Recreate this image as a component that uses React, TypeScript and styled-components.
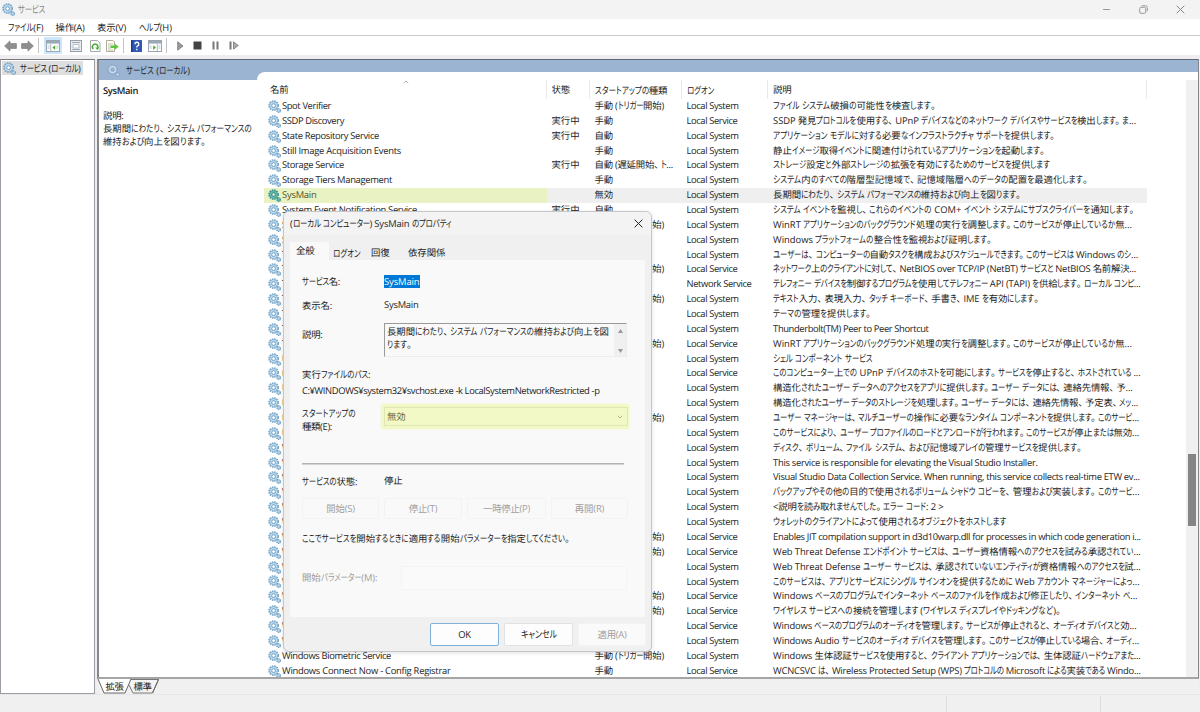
import React, { useLayoutEffect, useRef } from "react";
import styled, { createGlobalStyle, css } from "styled-components";

const Global = createGlobalStyle`
  * { box-sizing: border-box; }
  html, body { margin: 0; padding: 0; }
  body {
    width: 1200px; height: 712px; overflow: hidden; background: #f0f0f0; color: #222;
    font-family: "Open Sans", "Noto Sans CJK JP", sans-serif;
    font-size: 9.4px; line-height: 12px;
    text-rendering: geometricPrecision;
  }
`;

const Run = styled.span`
  display: inline-block;
  white-space: pre;
`;
const Kana = styled.span`
  display: inline-block;
  font-size: 10px;
  line-height: 12px;
  transform-origin: 0 50%;
  font-feature-settings: "palt" 1;
`;
const Stop = styled.span`
  font-feature-settings: "palt" 1;
  margin-right: 2.4px;
`;

/* Sets one line of text to the given width: kana are condensed, other scripts are tracked. */
function Fit({ w, children }: { w?: number; children: string }) {
  const ref = useRef<HTMLSpanElement>(null);
  useLayoutEffect(() => {
    const el = ref.current;
    if (!el || !w) return;
    const runs = Array.from(el.querySelectorAll<HTMLElement>("[data-kana]"));
    el.style.letterSpacing = "0px";
    runs.forEach(r => { r.style.transform = ""; r.style.marginRight = "0px"; });
    const widths = runs.map(r => r.getBoundingClientRect().width);
    const kana = widths.reduce((a, b) => a + b, 0);
    const rest = el.getBoundingClientRect().width - kana;
    if (kana > 0) {
      const f = Math.max(0.74, Math.min(1.02, (w - rest) / kana));
      runs.forEach((r, i) => {
        r.style.transform = `scaleX(${f})`;
        r.style.marginRight = `${(f - 1) * widths[i]}px`;
      });
    }
    const now = el.getBoundingClientRect().width;
    el.style.letterSpacing = `${(w - now) / children.length}px`;
  }, [w, children]);
  const parts = children.split(/([\u3041-\u30ff]+|[、。])/);
  return (
    <Run ref={ref}>
      {parts.map((p, i) => {
        if (i % 2 === 0) return p;
        return p === "、" || p === "。" ? <Stop key={i}>{p}</Stop> : <Kana key={i} data-kana="">{p}</Kana>;
      })}
    </Run>
  );
}

const Window = styled.div`
  position: relative;
  width: 1200px; height: 712px;
  display: flex; flex-direction: column;
`;
const TitleBar = styled.header`
  height: 19px; flex: none; background: #f3f3f3; color: #858585;
  display: flex; align-items: center; padding: 0 15.5px 0 2px; gap: 3px;
`;
const Caption = styled.div`
  margin-left: auto; display: flex; gap: 28px; align-items: center;
`;
const MenuBar = styled.nav`
  height: 17px; flex: none; background: #fff; border-bottom: 1px solid #c9c9c9;
  display: flex; align-items: center; padding: 1px 0 0 8px;
`;
const MenuItem = styled.div<{ $w: number }>`
  width: ${p => p.$w}px; flex: none;
`;
const ToolBar = styled.div`
  height: 19px; flex: none; background: #fff; display: flex; align-items: center;
`;
const Tool = styled.div<{ $w: number; $on?: boolean }>`
  width: ${p => p.$w}px; height: 17px; flex: none; display: flex; align-items: center; justify-content: center;
  ${p => p.$on && css`background: #cce6fb;`}
`;
const Sep = styled.i<{ $m: string }>`
  width: 1px; height: 15px; background: #c4c4c4; margin: ${p => p.$m}; flex: none;
`;
const Body = styled.div`
  flex: none; height: 639px; display: flex; padding-top: 4px; background: #f0edf0; gap: 2px;
`;
const Tree = styled.aside`
  width: 95px; height: 635px; background: #fff; border: 1px solid #9a9da3; border-top: 1px solid #777b80; flex: none;
`;
const TreeItem = styled.div`
  margin: 1px 0 0 1px; width: 81px; height: 14px; background: #dedede;
  display: flex; align-items: center; gap: 4px; padding-left: 1px;
`;
const Right = styled.section`
  width: 1102px; display: flex; flex-direction: column; background: #f0f0f0;
`;
const Pane = styled.div`
  height: 620px; flex: none; background: #9ab4d1; border: 1px solid #85898d; border-left-width: 2px; border-top-color: #5f6a76;
  border-bottom: 2px solid #a5a5a5; display: flex; flex-direction: column;
`;
const PaneTitle = styled.div`
  height: 12px; flex: none; display: flex; align-items: flex-start; gap: 6px; padding: 4px 0 0 8px; overflow: visible;
`;
const PaneBody = styled.div`
  flex: 1; display: flex; min-height: 0;
`;
const Detail = styled.div`
  width: 158px; margin-top: 8px; background: #fff; padding: 4px 0 0 4px; flex: none;
  display: flex; flex-direction: column;
`;
const DetailName = styled.b`
  font-weight: 600; margin-bottom: 13px; line-height: 13px;
`;
const List = styled.div`
  flex: 1; background: #fff; border-top-left-radius: 8px; display: flex; padding-top: 8px; min-width: 0;
`;
const Table = styled.div`
  width: 929px; flex: none; padding-left: 7px; overflow: hidden;
`;
const columns = "282.5px 43px 92px 86.6px 378.9px";
const Head = styled.div`
  display: grid; grid-template-columns: ${columns}; height: 19px;
`;
const HeadCell = styled.div`
  border-right: 1px solid #e9e9e9; padding: 4px 0 0 5px; position: relative; white-space: nowrap;
  &:first-child { padding-left: 6px; }
`;
const SortMark = styled.svg`
  position: absolute; left: 139px; top: 0;
`;
const Row = styled.div<{ $sel?: boolean }>`
  display: grid; grid-template-columns: ${columns}; height: 14.865px; width: 883px; white-space: nowrap;
  background: ${p => (p.$sel ? "#efefef" : "transparent")};
`;
const Cell = styled.div<{ $hl?: boolean }>`
  padding-left: 5px; line-height: 14.8px; overflow: hidden;
  &:first-child { padding-left: 4px; display: flex; align-items: center; gap: 1px; }
  ${p => p.$hl && css`background: #e9f2c3; color: #4c5426;`}
`;
const Scroll = styled.div`
  margin-left: auto; width: 12px; background: #f0f0f0; padding: 374px 2px 0;
`;
const Thumb = styled.div`
  height: 72px; background: #858585;
`;
const Tabs = styled.svg`
  display: block;
`;
const StatusBar = styled.footer`
  flex: 1; background: #f0f0f0; border-top: 1px solid #e6e6e6; display: flex; justify-content: flex-end; padding-top: 1px;
`;
const StatusCell = styled.div<{ $w: number }>`
  width: ${p => p.$w}px; border-left: 1px solid #dedede;
`;

const Dialog = styled.div`
  position: absolute; left: 283px; top: 211px; width: 369px; height: 441px;
  background: #f0f0f0; border: 1px solid #c6c6c6; border-radius: 6px; box-shadow: 0 1px 4px rgba(0,0,0,.12);
  display: flex; flex-direction: column; overflow: hidden;
`;
const DialogTitle = styled.div`
  height: 23px; flex: none; background: #f3f3f3; padding: 0 8.5px 0 6px;
  display: flex; align-items: center; justify-content: space-between;
`;
const TabStrip = styled.div`
  display: flex; height: 25px; flex: none; padding: 7px 0 0 6px;
`;
const Tab = styled.div<{ $w: number; $on?: boolean }>`
  width: ${p => p.$w}px; padding: ${p => (p.$on ? "3px 0 0 6px" : "5px 0 0 4px")};
  ${p => p.$on && css`background: #f9f9f9;`}
`;
const Page = styled.div`
  margin-left: 6px; width: 355px; height: 357px; flex: none; background: #f9f9f9; padding: 9px 0 0 12px;
  display: flex; flex-direction: column;
`;
const Field = styled.div<{ $h: number; $muted?: boolean }>`
  height: ${p => p.$h}px; flex: none; display: flex; align-items: center;
  ${p => p.$muted && css`color: #9a9a9a;`}
`;
const Label = styled.div<{ $w?: number; $shift?: number }>`
  width: ${p => p.$w ?? 82}px; flex: none; margin-top: ${p => p.$shift ?? 0}px; line-height: 13px;
`;
const Selected = styled.span`
  background: #0078d7; color: #fff; height: 13px; line-height: 13px; width: 36px;
`;
const Memo = styled.div`
  width: 243px; height: 34px; border: 1px solid #ececec; border-top-color: #9a9a9a; border-left-color: #9a9a9a;
  display: flex; justify-content: space-between; padding-left: 2px;
`;
const MemoText = styled.div`
  padding-top: 1px; line-height: 12.5px;
`;
const MemoScroll = styled.div`
  width: 12px; background: #f0f0f0; color: #999; display: flex; flex-direction: column; justify-content: space-between;
  align-items: center; padding: 5px 0 3px;
`;
const Combo = styled.div`
  width: 248px; height: 25px; margin-left: -3px; background: #f2f9c6; padding: 3px 1px 3px 3px; border-radius: 2px; box-shadow: 0 0 2px #f1f8c4;
`;
const ComboBox = styled.div`
  height: 19px; border: 1px solid #dfe8b0; display: flex; align-items: center; justify-content: space-between;
  padding: 1px 4px 0 2px; color: #626845;
`;
const Rule = styled.div`
  width: 322px; height: 2px; background: #b4b4b4; border-bottom: 1px solid #d4d4d4; margin: 26px 0 7px; flex: none;
`;
const PushRow = styled.div`
  display: flex; justify-content: space-between; width: 326px; height: 21px; margin: 8px 0 8px; flex: none;
`;
const Push = styled.button<{ $w: number; $kind?: "default" | "off" | "ghost" }>`
  width: ${p => p.$w}px; height: 100%; padding: 1px 0 0; font: inherit; color: #222; background: #fdfdfd; border: 1px solid #e2e2e2; border-radius: 2px;
  ${p => p.$kind === "default" && css`border-color: #7fb0d8;`}
  ${p => p.$kind === "off" && css`color: #a0a0a0; border-color: #f3f3f3; background: #f9f9f9;`}
  ${p => p.$kind === "ghost" && css`color: #a0a0a0; border-color: #f3f3f3; background: #fafafa;`}
`;
const Param = styled.div`
  width: 226px; height: 24px; border: 1px solid #f4f4f4; background: #fafafa;
`;
const DialogFoot = styled.div`
  display: flex; gap: 5px; padding: 6px 5px 0 0; justify-content: flex-end; height: 28.5px;
`;
const Icon = styled.svg`
  flex: none; display: block;
`;

const tones = {
  blue: ["#6a9cc2", "#c6e0f1", "#ffffff", "#7ba8ca"],
  teal: ["#2f8a8c", "#6fbdb0", "#cfe9bd", "#3f9a96"],
  pale: ["#8aa8c8", "#d3e3f1", "#9ab4d1", "#8aa8c8"],
};
function Gear({ tone = "blue" }: { tone?: keyof typeof tones }) {
  const [edge, body, hole, small] = tones[tone];
  return (
    <Icon width="13" height="13" viewBox="0 0 13 13">
      <circle cx="5.6" cy="5.6" r="4.6" fill="none" stroke={edge} strokeWidth="1.5" strokeDasharray="1.5 .91" />
      <circle cx="5.6" cy="5.6" r="4" fill={body} stroke={edge} strokeWidth=".6" />
      <circle cx="5.6" cy="5.6" r="1.9" fill={hole} stroke={edge} strokeWidth="1" />
      <circle cx="10.6" cy="10.6" r="1.7" fill={body} stroke={small} strokeWidth="1.5" strokeDasharray="1.3 .4" />
    </Icon>
  );
}

type Svc = [string, number, string, string, number];
const T = "手動 (トリガー開始)";
const services: Svc[] = [
  ["Spot Verifier", 49, "", T, 0], ["SSDP Discovery", 62, "実行中", "手動", 1],
  ["State Repository Service", 97, "実行中", "自動", 0], ["Still Image Acquisition Events", 119, "", "手動", 0],
  ["Storage Service", 62, "実行中", "自動 (遅延開始、ト...", 0], ["Storage Tiers Management", 110, "", "手動", 0],
  ["SysMain", 34.5, "", "無効", 0], ["System Event Notification Service", 135, "実行中", "自動", 0],
  ["System Events Broker", 0, "実行中", T, 0], ["System Guard Runtime Monitor Broker", 0, "実行中", "自動", 0],
  ["Task Scheduler", 0, "実行中", "自動", 0], ["TCP/IP NetBIOS Helper", 0, "実行中", T, 1],
  ["Telephony", 0, "", "手動", 2], ["Text Input Management Service", 0, "実行中", T, 0],
  ["Themes", 0, "実行中", "自動", 0], ["Thunderbolt(TM) Peer to Peer Shortcut", 0, "実行中", "自動", 0],
  ["Time Broker", 0, "実行中", T, 1], ["Udk User Service", 0, "実行中", "手動", 0],
  ["UPnP Device Host", 0, "", "手動", 1], ["User Data Access", 0, "実行中", "手動", 0],
  ["User Data Storage", 0, "実行中", "手動", 0], ["User Manager", 0, "実行中", T, 0],
  ["User Profile Service", 0, "実行中", "自動", 0], ["Virtual Disk", 0, "", "手動", 0],
  ["Visual Studio Installer Elevation Service", 0, "", "手動", 0], ["Visual Studio Standard Collector Service", 0, "", "手動", 0],
  ["Volume Shadow Copy", 0, "", "手動", 0], ["WaaSMedicSvc", 0, "", "手動", 0],
  ["WalletService", 0, "", "手動", 0], ["WarpJITSvc", 0, "", T, 1],
  ["Web Threat Defense Service", 0, "実行中", T, 1], ["Web Threat Defense User Service", 0, "実行中", "自動", 0],
  ["Web Account Manager", 0, "実行中", "手動", 0], ["WebClient", 0, "", T, 1],
  ["Wi-Fi Direct Service", 0, "", T, 1], ["Windows Audio", 0, "実行中", "自動", 1],
  ["Windows Audio Endpoint Builder", 0, "実行中", "自動", 0], ["Windows Biometric Service", 109, "", T, 0],
  ["Windows Connect Now - Config Registrar", 168.5, "", "手動", 1],
];
const descriptions: [string, number][] = [
  ["ファイル システム破損の可能性を検査します。", 165],
  ["SSDP 発見プロトコルを使用する、UPnP デバイスなどのネットワーク デバイスやサービスを検出します。ま...", 363],
  ["アプリケーション モデルに対する必要なインフラストラクチャ サポートを提供します。", 284],
  ["静止イメージ取得イベントに関連付けられているアプリケーションを起動します。", 274],
  ["ストレージ設定と外部ストレージの拡張を有効にするためのサービスを提供します", 277],
  ["システム内のすべての階層型記憶域で、記憶域階層へのデータの配置を最適化します。", 317],
  ["長期間にわたり、システム パフォーマンスの維持および向上を図ります。", 250],
  ["システム イベントを監視し、これらのイベントの COM+ イベント システムにサブスクライバーを通知します。", 363.5],
  ["WinRT アプリケーションのバックグラウンド処理の実行を調整します。このサービスが停止しているか無...", 359],
  ["Windows プラットフォームの整合性を監視および証明します。", 221],
  ["ユーザーは、コンピューターの自動タスクを構成およびスケジュールできます。このサービスは Windows のシ...", 365],
  ["ネットワーク上のクライアントに対して、NetBIOS over TCP/IP (NetBT) サービスと NetBIOS 名前解決...", 363],
  ["テレフォニー デバイスを制御するプログラムを使用してテレフォニー API (TAPI) を供給します。ローカル コンピ...", 367.6],
  ["テキスト入力、表現入力、タッチ キーボード、手書き、IME を有効にします。", 268],
  ["テーマの管理を提供します。", 100],
  ["Thunderbolt(TM) Peer to Peer Shortcut", 155.5],
  ["WinRT アプリケーションのバックグラウンド処理の実行を調整します。このサービスが停止しているか無...", 359],
  ["シェル コンポーネント サービス", 99],
  ["このコンピューター上での UPnP デバイスのホストを可能にします。サービスを停止すると、ホストされている ...", 367.6],
  ["構造化されたユーザー データへのアクセスをアプリに提供します。ユーザー データには、連絡先情報、予...", 359.5],
  ["構造化されたユーザー データのストレージを処理します。ユーザー データには、連絡先情報、予定表、メッ...", 365],
  ["ユーザー マネージャーは、マルチユーザーの操作に必要なランタイム コンポーネントを提供します。このサービ...", 366],
  ["このサービスにより、ユーザー プロファイルのロードとアンロードが行われます。このサービスが停止または無効...", 366],
  ["ディスク、ボリューム、ファイル システム、および記憶域アレイの管理サービスを提供します。", 311],
  ["This service is responsible for elevating the Visual Studio Installer.", 264.5],
  ["Visual Studio Data Collection Service. When running, this service collects real-time ETW ev...", 366.5],
  ["バックアップやその他の目的で使用されるボリューム シャドウ コピーを、管理および実装します。このサービ...", 366.5],
  ["<説明を読み取れませんでした。エラー コード: 2 >", 170.5],
  ["ウォレットのクライアントによって使用されるオブジェクトをホストします", 233.6],
  ["Enables JIT compilation support in d3d10warp.dll for processes in which code generation i...", 367.6],
  ["Web Threat Defense エンドポイント サービスは、ユーザー資格情報へのアクセスを試みる承認されてい...", 367.6],
  ["Web Threat Defense ユーザー サービスは、承認されていないエンティティが資格情報へのアクセスを試...", 367.6],
  ["このサービスは、アプリとサービスにシングル サインオンを提供するために Web アカウント マネージャーによっ...", 366.5],
  ["Windows ベースのプログラムでインターネット ベースのファイルを作成および修正したり、インターネット ベ...", 364.4],
  ["ワイヤレス サービスへの接続を管理します (ワイヤレス ディスプレイやドッキングなど)。", 290],
  ["Windows ベースのプログラムのオーディオを管理します。サービスが停止されると、オーディオ デバイスと効...", 363.4],
  ["Windows Audio サービスのオーディオ デバイスを管理します。このサービスが停止している場合、オーディ...", 366],
  ["Windows 生体認証サービスを使用すると、クライアント アプリケーションでは、生体認証ハードウェアまた...", 367.6],
  ["WCNCSVC は、Wireless Protected Setup (WPS) プロトコルの Microsoft による実装である Windo...", 367.6],
];
const accounts: [string, number][] = [["Local System", 52], ["Local Service", 51], ["Network Service", 65]];
const startWidth = (s: string) => (s === T ? 69.5 : s.length > 3 ? 78.5 : 18.5);

const Arrow = ({ flip }: { flip?: boolean }) => (
  <Icon width="13" height="12" viewBox="0 0 13 12">
    <path d="M.6 6 6 .9V3.6H12.4V8.4H6V11.1Z" transform={flip ? "matrix(-1 0 0 1 13 0)" : undefined} fill="#8f8f8f" stroke="#7c7c7c" strokeWidth=".7" />
  </Icon>
);
const PanelIcon = ({ right }: { right?: boolean }) => (
  <Icon width="14" height="12" viewBox="0 0 14 12">
    <rect x=".5" y=".5" width="13" height="11" fill="#fff" stroke="#9ba6b0" />
    <path d="M1 1h12v2.6H1z" fill="#9aa9b7" />
    <path d={right ? "M9.3 4v7.5" : "M4.7 4v7.5"} stroke="#9ba6b0" strokeWidth=".8" />
    <path d={right ? "M5.2 5.2 8 7.6 5.2 10Z" : "M9.2 5.2 6.4 7.6 9.2 10Z"} fill="#45b030" />
    <path d={right ? "M10.4 6h2M10.4 8h2M1.6 6h2M1.6 8h2" : "M1.6 6h2M1.6 8h2M10.4 6h2M10.4 8h2"} stroke="#a3b0bc" strokeWidth=".8" />
  </Icon>
);

export default function App() {
  return (
    <Window>
      <Global />
      <TitleBar>
        <Gear />
        <Fit w={27}>サービス</Fit>
        <Caption>
          <svg width="9" height="9"><path d="M1 4.5h7" stroke="#999" /></svg>
          <svg width="9" height="9" fill="none" stroke="#999"><rect x=".7" y="2.3" width="6" height="6" rx="1.2" /><path d="M2.6.8H6.6a1.7 1.7 0 0 1 1.7 1.7V6.2" /></svg>
          <svg width="9" height="9" stroke="#888"><path d="M.7.7l7.6 7.6M8.3.7.7 8.3" /></svg>
        </Caption>
      </TitleBar>
      <MenuBar>
        <MenuItem $w={47.5}><Fit w={35.5}>ファイル(F)</Fit></MenuItem>
        <MenuItem $w={41.5}><Fit w={29}>操作(A)</Fit></MenuItem>
        <MenuItem $w={41.5}><Fit w={29}>表示(V)</Fit></MenuItem>
        <MenuItem $w={40}><Fit w={33.5}>ヘルプ(H)</Fit></MenuItem>
      </MenuBar>
      <ToolBar>
        <Tool $w={20}><Arrow /></Tool>
        <Tool $w={15}><Arrow flip /></Tool>
        <Sep $m="0 5px 0 3px" />
        <Tool $w={18} $on><PanelIcon /></Tool>
        <Tool $w={28}>
          <Icon width="12" height="12"><rect x=".5" y=".5" width="11" height="11" fill="#e9edf1" stroke="#98a0a8" /><path d="M2 2.5h8M2 9.5h8" stroke="#a0aab4" /><path d="M3 4.5h6v3.5H3z" fill="#fff" stroke="#a8b2bc" strokeWidth=".8" /></Icon>
        </Tool>
        <Tool $w={10}>
          <Icon width="11" height="12"><path d="M.5.5H7.5L10 3V11.5H.5Z" fill="#fff" stroke="#a9a9a9" /><path d="M3.4 8.9A2.7 2.7 0 1 1 7.6 7.8" fill="none" stroke="#3fae2c" strokeWidth="1.5" /><path d="M5.4 7.6H9.2L7.4 10.2Z" fill="#3fae2c" /></Icon>
        </Tool>
        <Tool $w={25}>
          <Icon width="13" height="12"><path d="M.5.5H7L8.5 2V11.5H.5Z" fill="#fffdf0" stroke="#b0ab98" /><path d="M2 4h5M2 6h3M2 8h3M2 10h5" stroke="#aaa" strokeWidth=".7" /><path d="M4.6 5.6H8.6V3.6L12.7 6.8 8.6 10V8H4.6Z" fill="#5ec63c" /></Icon>
        </Tool>
        <Sep $m="0 4px 0 -2px" />
        <Tool $w={17}>
          <Icon width="11" height="12" viewBox="0 0 11 12"><rect width="11" height="12" rx=".5" fill="#3358b4" /><rect width="1.5" height="12" fill="#1d3a8a" /><path d="M4 4.3A1.9 1.9 0 1 1 6.3 6Q5.8 6.3 5.8 7.6M5.8 8.8V10.2" stroke="#fff" strokeWidth="1.3" fill="none" /></Icon>
        </Tool>
        <Tool $w={20}><PanelIcon right /></Tool>
        <Sep $m="0 0 0 1px" />
        <Tool $w={26}><Icon width="7" height="10"><path d="M.7.8 6 5 .7 9.2Z" fill="#999" stroke="#777" strokeWidth=".8" /></Icon></Tool>
        <Tool $w={8}><Icon width="9" height="9"><rect x=".5" y=".5" width="8" height="8" fill="#444" /></Icon></Tool>
        <Tool $w={28}><Icon width="7" height="9"><path d="M.5.5h2v8h-2zM4.5.5h2v8h-2z" fill="#777" /></Icon></Tool>
        <Tool $w={9}><Icon width="10" height="9"><path d="M.5.5h2v8h-2z" fill="#777" /><path d="M4.5 .8 9.3 4.5 4.5 8.2Z" fill="#aaa" stroke="#777" strokeWidth=".8" /></Icon></Tool>
      </ToolBar>
      <Body>
        <Tree>
          <TreeItem><Gear /><Fit w={60.5}>サービス (ローカル)</Fit></TreeItem>
        </Tree>
        <Right>
          <Pane>
            <PaneTitle><Gear tone="pale" /><Fit w={64}>サービス (ローカル)</Fit></PaneTitle>
            <PaneBody>
              <Detail>
                <DetailName><Fit w={35}>SysMain</Fit></DetailName>
                <span><Fit w={20.5}>説明:</Fit></span>
                <span><Fit w={149}>長期間にわたり、システム パフォーマンスの</Fit></span>
                <span><Fit w={105}>維持および向上を図ります。</Fit></span>
              </Detail>
              <List>
                <Table>
                  <Head>
                    <HeadCell><Fit w={18.5}>名前</Fit><SortMark width="6" height="4"><path d="M.8 3 3 1 5.2 3" fill="none" stroke="#999" strokeWidth=".8" /></SortMark></HeadCell>
                    <HeadCell><Fit w={18.5}>状態</Fit></HeadCell>
                    <HeadCell><Fit w={73}>スタートアップの種類</Fit></HeadCell>
                    <HeadCell><Fit w={27}>ログオン</Fit></HeadCell>
                    <HeadCell><Fit w={18.5}>説明</Fit></HeadCell>
                  </Head>
                  {services.map(([name, w, state, start, acc], i) => (
                    <Row key={i} $sel={i === 6}>
                      <Cell $hl={i === 6}><Gear tone={i === 6 ? "teal" : "blue"} /><Fit w={w}>{name}</Fit></Cell>
                      <Cell>{state && <Fit w={28}>{state}</Fit>}</Cell>
                      <Cell><Fit w={startWidth(start)}>{start}</Fit></Cell>
                      <Cell><Fit w={accounts[acc][1]}>{accounts[acc][0]}</Fit></Cell>
                      <Cell><Fit w={descriptions[i][1]}>{descriptions[i][0]}</Fit></Cell>
                    </Row>
                  ))}
                </Table>
                <Scroll><Thumb /></Scroll>
              </List>
            </PaneBody>
          </Pane>
          <Tabs width="64" height="15" fontSize="9.4">
            <path d="M32 .5H61.5L55.5 14H36L32 6" fill="#f4f4f4" stroke="#777" />
            <path d="M1 0H34L28 14H7Z" fill="#fff" />
            <path d="M1 0 7 14H28L34 0M61.5 .5 55.5 14" fill="none" stroke="#666" />
            <text x="8.5" y="11.2" textLength="18.5" fill="#222">拡張</text>
            <text x="36.5" y="11.2" textLength="18.5" fill="#222">標準</text>
          </Tabs>
        </Right>
      </Body>
      <StatusBar><StatusCell $w={154} /><StatusCell $w={100} /></StatusBar>

      <Dialog>
        <DialogTitle>
          <Fit w={161}>(ローカル コンピューター) SysMain のプロパティ</Fit>
          <svg width="9" height="9" stroke="#222"><path d="M.6.6l7.8 7.8M8.4.6.6 8.4" /></svg>
        </DialogTitle>
        <TabStrip>
          <Tab $w={39} $on><Fit w={18.5}>全般</Fit></Tab>
          <Tab $w={38}><Fit w={27.5}>ログオン</Fit></Tab>
          <Tab $w={37}><Fit w={18.5}>回復</Fit></Tab>
          <Tab $w={50}><Fit w={37.5}>依存関係</Fit></Tab>
        </TabStrip>
        <Page>
          <Field $h={24}><Label><Fit w={38}>サービス名:</Fit></Label><Selected><Fit w={35.5}>SysMain</Fit></Selected></Field>
          <Field $h={24}><Label><Fit w={30}>表示名:</Fit></Label><Fit w={34.5}>SysMain</Fit></Field>
          <Field $h={45}>
            <Label $shift={-11}><Fit w={20.5}>説明:</Fit></Label>
            <Memo>
              <MemoText><Fit w={222}>長期間にわたり、システム パフォーマンスの維持および向上を図</Fit><br /><Fit w={27}>ります。</Fit></MemoText>
              <MemoScroll>
                <svg width="5" height="4"><path d="M0 4 2.5 0 5 4Z" fill="#999" /></svg>
                <svg width="5" height="4"><path d="M0 0 2.5 4 5 0Z" fill="#999" /></svg>
              </MemoScroll>
            </Memo>
          </Field>
          <Field $h={25}><Label><Fit w={68.5}>実行ファイルのパス:</Fit></Label></Field>
          <Field $h={8}><Fit w={297.5}>C:¥WINDOWS¥system32¥svchost.exe -k LocalSystemNetworkRestricted -p</Fit></Field>
          <Field $h={42}>
            <Label $shift={8}><Fit w={53.5}>スタートアップの</Fit><br /><Fit w={30}>種類(E):</Fit></Label>
            <Combo><ComboBox><Fit w={18.5}>無効</Fit><svg width="6" height="4"><path d="M.8.8 3 3 5.2.8" fill="none" stroke="#a0a678" strokeWidth=".8" /></svg></ComboBox></Combo>
          </Field>
          <Rule />
          <Field $h={18}><Label><Fit w={55.5}>サービスの状態:</Fit></Label><Fit w={18.5}>停止</Fit></Field>
          <PushRow>
            <Push $w={77} $kind="off"><Fit w={28.5}>開始(S)</Fit></Push>
            <Push $w={78} $kind="off"><Fit w={28.5}>停止(T)</Fit></Push>
            <Push $w={79} $kind="off"><Fit w={47}>一時停止(P)</Fit></Push>
            <Push $w={77} $kind="off"><Fit w={29.5}>再開(R)</Fit></Push>
          </PushRow>
          <Field $h={22}><Fit w={270}>ここでサービスを開始するときに適用する開始パラメーターを指定してください。</Fit></Field>
          <Field $h={57} $muted><Label $w={99}><Fit w={75.5}>開始パラメーター(M):</Fit></Label><Param /></Field>
        </Page>
        <DialogFoot>
          <Push $w={69} $kind="default"><Fit w={12.5}>OK</Fit></Push>
          <Push $w={69}><Fit w={36}>キャンセル</Fit></Push>
          <Push $w={68} $kind="ghost"><Fit w={29}>適用(A)</Fit></Push>
        </DialogFoot>
      </Dialog>
    </Window>
  );
}
